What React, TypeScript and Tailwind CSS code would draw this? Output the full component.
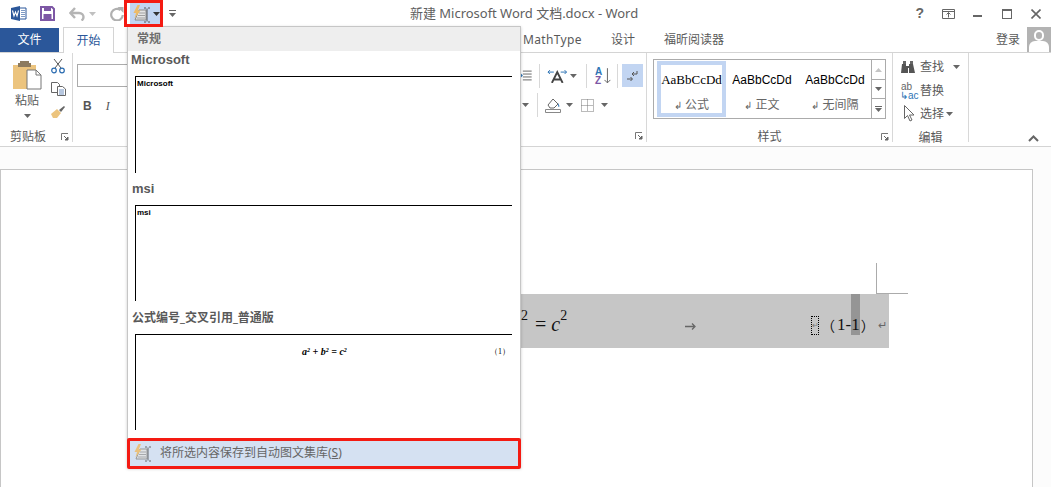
import React from "react";

const Caret = ({ c = "#666", className = "" }: { c?: string; className?: string }) => (
  <svg width="7" height="4" viewBox="0 0 7 4" className={className}><path d="M0 0h7L3.500 4z" fill={c} /></svg>
);

const AutoText = ({ faded = false }: { faded?: boolean }) => (
  <svg width="18" height="18" viewBox="0 0 18 18" opacity={faded ? 0.85 : 1}>
    <path d="M2 15 6 5h7v10z" fill="#e4e4e4" stroke="#8a8a8a" />
    <path d="M6 8h6M5 10.500h7M4 13h8" stroke="#a0a0a0" />
    <path d="M4.500 0 .5 8h2.500L1.500 13.500 7.500 5.500H4.800L7 0z" fill="#eebc68" />
    <path d="M11 3h2M15 3h2M11 17h2M15 17h2M14 3.500v13" stroke="#555" fill="none" />
  </svg>
);

const Launcher = () => (
  <svg width="8" height="8" viewBox="0 0 8 8"><path d="M.5 7V.5H7" fill="none" stroke="#777" /><path d="M3 3l4 4M7 4v3H4z" stroke="#666" fill="#666" /></svg>
);

const Sep = ({ h = "h-[24px]" }: { h?: string }) => <div className={`w-px bg-[#d8d8d8] ${h}`} />;

const Preview = ({ children, h }: { children: React.ReactNode; h: string }) => (
  <div className={`ml-[7px] w-[377px] ${h} border-t border-l border-black pl-[1px] pt-[2px] font-['Liberation_Sans',sans-serif] text-[8px] leading-[9px] font-bold text-black`}>
    {children}
  </div>
);

function TitleBar() {
  return (
    <div className="relative flex h-[27px] items-center">
      <svg width="17" height="17" viewBox="0 0 17 17" className="ml-[10px]">
        <path d="M1 3 10 1v15l-9-2z" fill="#2b579a" />
        <path d="M10 3h6v11h-6" fill="#fff" stroke="#2b579a" />
        <path d="M11 5.500h4M11 7.500h4M11 9.500h4M11 11.500h4" stroke="#7f9ac4" />
        <path d="M2.500 5.500 4 11l1.500-4L7 11l1.500-5.500" fill="none" stroke="#fff" strokeWidth="1.100" />
      </svg>
      <svg width="15" height="15" viewBox="0 0 15 15" className="ml-[13px]">
        <path d="M1 1h11l2 2v11H1z" fill="#fff" stroke="#7d57a5" strokeWidth="2" />
        <path d="M4 1h7v4H4z" fill="#7d57a5" />
        <path d="M3.500 8h8v6h-8z" fill="#7d57a5" />
      </svg>
      <svg width="16" height="14" viewBox="0 0 16 14" className="ml-[14px]">
        <path d="M2 6h8c3 0 4.500 2 4.500 4s-1 3-2 3.500" fill="none" stroke="#b5b5b5" strokeWidth="2.400" />
        <path d="M6 1 1.500 6 6 11" fill="none" stroke="#b5b5b5" strokeWidth="2.400" />
      </svg>
      <Caret c="#c0c0c0" className="ml-[4px]" />
      <svg width="14" height="14" viewBox="0 0 14 14" className="ml-[14px]">
        <path d="M10.500 3A5.800 5.800 0 1 0 12.800 8" fill="none" stroke="#b0b0b0" strokeWidth="2.200" />
        <path d="M7.500 0h6v6z" fill="#b0b0b0" />
      </svg>
      <div className="ml-[6px] flex h-[24px] w-[32px] items-center justify-center gap-[2px] bg-[#c2d5f2]">
        <AutoText />
        <Caret c="#333" />
      </div>
      <svg width="7" height="8" viewBox="0 0 7 8" className="ml-[7px]"><path d="M0 .5h7" stroke="#666" /><path d="M0 3h7L3.500 7z" fill="#666" /></svg>
      <div className="ml-[234px] text-[13px] tracking-[-0.02px] text-[#606060]">新建 Microsoft Word 文档.docx - Word</div>
      <div className="ml-auto flex items-center">
        <span className="mr-[18px] font-['Liberation_Sans',sans-serif] text-[14px] font-bold text-[#666]">?</span>
        <svg width="13" height="10" viewBox="0 0 13 10" className="mr-[18px]"><path d="M.5.500h12v9H.5zM.5 2.500h12" fill="none" stroke="#666" /><path d="M6.500 3.500v5M4.500 5.500l2-2 2 2" fill="none" stroke="#666" /></svg>
        <div className="mr-[20px] h-[2px] w-[9px] translate-y-[2px] bg-[#666]" />
        <div className="mr-[19px] h-[10px] w-[10px] border border-t-[2px] border-[#666]" />
        <svg width="10" height="10" viewBox="0 0 10 10" className="mr-[10px]"><path d="M.5.500l9 9M9.500.500l-9 9" stroke="#666" strokeWidth="1.600" /></svg>
      </div>
    </div>
  );
}

function TabRow() {
  return (
    <div className="flex h-[26px] items-stretch border-b border-[#d4d4d4] text-[12px] text-[#595959]">
      <div className="mt-[1px] flex w-[59px] items-center justify-center bg-[#2b579a] text-white">文件</div>
      <div className="-mb-px ml-[4px] flex w-[51px] items-center justify-center border border-b-0 border-[#d4d4d4] bg-white text-[#2b579a]">开始</div>
      <div className="ml-[409px] flex items-center tracking-[0.35px]">MathType</div>
      <div className="ml-[29px] flex items-center">设计</div>
      <div className="ml-[29px] flex items-center">福昕阅读器</div>
      <div className="ml-auto flex items-center">登录</div>
      <div className="relative ml-[7px] h-[25px] w-[24px] overflow-hidden bg-[#b3b3b3]">
        <div className="mx-auto mt-[3px] h-[11px] w-[10px] rounded-full border-2 border-white" />
        <div className="mx-auto h-[11px] w-[20px] rounded-t-[6px] bg-white" />
      </div>
    </div>
  );
}

function Clipboard() {
  return (
    <div className="flex w-[73px] flex-col border-r border-[#d8d8d8] text-[12px] text-[#5a5a5a]">
      <div className="flex h-[76px] shrink-0">
        <div className="ml-[12px] flex w-[30px] flex-col items-center">
          <svg width="29" height="30" viewBox="0 0 29 30" className="mt-[7px]">
            <path d="M0 5h23v24H0z" fill="#ecc47e" />
            <path d="M7 3h9V1H7zM5 3h13v4H5z" fill="#8d7b5f" />
            <path d="M14 10h9l5 5v14H14z" fill="#fff" stroke="#777" />
            <path d="M23 10v5h5" fill="none" stroke="#777" />
          </svg>
          <div className="mt-[2px] leading-[17px]">粘贴</div>
          <Caret className="mt-[5px]" />
        </div>
        <div className="ml-[8px] flex flex-col items-center">
          <svg width="14" height="16" viewBox="0 0 14 16" className="mt-[5px]">
            <path d="M3 1l7 9M11 1 4 10" stroke="#555" fill="none" />
            <circle cx="3" cy="12.500" r="2.300" fill="none" stroke="#2b6cb0" strokeWidth="1.200" />
            <circle cx="11" cy="12.500" r="2.300" fill="none" stroke="#2b6cb0" strokeWidth="1.200" />
          </svg>
          <svg width="15" height="14" viewBox="0 0 15 14" className="mt-[8px]">
            <path d="M.5.500h6l2 2v8h-8z" fill="#fff" stroke="#666" />
            <path d="M6.500 4.500h5l3 2.500v6.500h-8z" fill="#fff" stroke="#666" />
            <path d="M8 8h5M8 10h5M8 12h5" stroke="#6f8fbf" />
          </svg>
          <svg width="16" height="14" viewBox="0 0 16 14" className="mt-[9px]">
            <path d="M1 9 7 4l4 4-4 5H3z" fill="#ecc47e" />
            <path d="M9 5l5-4 1 1-4 5z" fill="#666" />
          </svg>
        </div>
      </div>
      <div className="mt-[2px] flex items-center pl-[10px] leading-[12px]">
        <span>剪贴板</span>
        <span className="ml-[15px] flex"><Launcher /></span>
      </div>
    </div>
  );
}

function FontPara() {
  return (
    <div className="flex w-[574px] flex-col border-r border-[#d8d8d8]">
      <div className="flex h-[76px] shrink-0 justify-between">
        <div className="ml-[4px] mt-[11px]">
          <div className="h-[23px] w-[53px] border border-[#ababab] bg-white" />
          <div className="mt-[10px] flex items-center font-['Liberation_Serif',serif] text-[12px] text-[#555]">
            <span className="ml-[6px] font-['Liberation_Sans',sans-serif] font-bold">B</span>
            <span className="ml-[14px] italic">I</span>
          </div>
        </div>
        <div className="mr-[3px] mt-[11px] flex w-[126px] flex-col">
          <div className="flex h-[23px] items-center">
            <svg width="15" height="11" viewBox="0 0 15 11"><path d="M6 1h9M6 4h9M6 7h9M6 10h9" stroke="#666" /><path d="M0 5.500h4M2.500 3l2.500 2.500L2.500 8" fill="none" stroke="#2f75b5" strokeWidth="1.500" /></svg>
            <div className="ml-[7px]"><Sep /></div>
            <svg width="21" height="14" viewBox="0 0 21 14" className="ml-[7px]"><path d="M5 14 10.500 3 16 14M7 10.500h7" fill="none" stroke="#444" strokeWidth="2" /><path d="M1 3h6M14 3h6M3 1 1 3l2 2M18 1l2 2-2 2" fill="none" stroke="#2f75b5" /></svg>
            <Caret className="ml-[3px]" />
            <div className="ml-[9px]"><Sep /></div>
            <div className="ml-[8px] flex h-[18px] w-[16px] flex-col font-['Liberation_Sans',sans-serif] text-[10px] leading-[9px] font-bold">
              <span className="text-[#2f75b5]">A</span>
              <span className="text-[#7d57a5]">Z</span>
            </div>
            <svg width="7" height="16" viewBox="0 0 7 16" className="-ml-[7px]"><path d="M3.500 0v15M.5 12l3 3 3-3" fill="none" stroke="#666" /></svg>
            <div className="ml-[6px]"><Sep /></div>
            <div className="ml-[4px] flex h-[23px] w-[22px] items-center justify-center bg-[#c2d5f2]">
              <svg width="11" height="12" viewBox="0 0 11 12"><path d="M10 1v3H5M7 2 5 4l2 2" fill="none" stroke="#555" /><path d="M0 9h5M3.500 7 5.500 9l-2 2" fill="none" stroke="#555" /></svg>
            </div>
          </div>
          <div className="mt-[6px] flex h-[24px] items-center">
            <Caret className="ml-[5px]" />
            <div className="ml-[8px]"><Sep /></div>
            <svg width="16" height="15" viewBox="0 0 16 15" className="ml-[7px]"><path d="M3 7 8 1l5 5-4 4H5z" fill="#fff" stroke="#666" /><path d="M13 5c1 2 2 3 1 4-1 0-1-2-1-4z" fill="#2f75b5" /><path d="M.5 11.500h15v3H.5z" fill="#fff" stroke="#888" /></svg>
            <Caret className="ml-[5px]" />
            <svg width="13" height="13" viewBox="0 0 13 13" className="ml-[8px]"><path d="M.5.500h12v12H.5zM6.500.500v12M.5 6.500h12" fill="none" stroke="#777" strokeDasharray="1 1" /></svg>
            <Caret className="ml-[7px]" />
          </div>
        </div>
      </div>
      <div className="mt-[3px] flex justify-end pr-[3px]"><Launcher /></div>
    </div>
  );
}

function Styles() {
  const cell = "flex h-[56px] flex-col items-center overflow-hidden pt-[11px]";
  return (
    <div className="flex w-[246px] flex-col border-r border-[#d8d8d8]">
      <div className="ml-[6px] mt-[6px] flex h-[60px] w-[233px] shrink-0 border border-[#ababab] bg-white">
        <div className="ml-[3px] mt-[1px] flex h-[56px] w-[69px] flex-col items-center overflow-hidden border-[4px] border-[#c2d5f2] pt-[7px]">
          <span className="font-['Liberation_Serif',serif] text-[13px] leading-[16px] whitespace-nowrap text-black">AaBbCcDd</span>
          <span className="mt-[9px] text-[12px] leading-[16px] text-[#666]"><span className="text-[10px]">↲</span> 公式</span>
        </div>
        <div className={`${cell} ml-[6px] mt-[1px] w-[60px]`}>
          <span className="font-['Liberation_Sans',sans-serif] text-[12px] leading-[16px] whitespace-nowrap text-black">AaBbCcDd</span>
          <span className="mt-[9px] text-[12px] leading-[16px] text-[#666]"><span className="text-[10px]">↲</span> 正文</span>
        </div>
        <div className={`${cell} ml-[13px] mt-[1px] w-[60px]`}>
          <span className="font-['Liberation_Sans',sans-serif] text-[12px] leading-[16px] whitespace-nowrap text-black">AaBbCcDd</span>
          <span className="mt-[9px] text-[12px] leading-[16px] whitespace-nowrap text-[#666]"><span className="text-[10px]">↲</span> 无间隔</span>
        </div>
        <div className="ml-auto flex w-[14px] flex-col border-l border-[#ababab]">
          <div className="flex h-[20px] items-center justify-center border-b border-[#ababab]"><svg width="7" height="4" viewBox="0 0 7 4"><path d="M0 4h7L3.500 0z" fill="#c4c4c4" /></svg></div>
          <div className="flex h-[19px] items-center justify-center border-b border-[#ababab]"><Caret /></div>
          <div className="flex flex-1 flex-col items-center justify-center gap-[1px]"><div className="h-px w-[7px] bg-[#666]" /><Caret /></div>
        </div>
      </div>
      <div className="relative mt-[12px] text-center text-[12px] leading-[12px] text-[#5a5a5a]">
        样式
        <span className="absolute top-[2px] right-[3px] flex"><Launcher /></span>
      </div>
    </div>
  );
}

function Editing() {
  return (
    <div className="flex w-[76px] flex-col border-r border-[#d8d8d8] text-[12px] text-[#5a5a5a]">
      <div className="mt-[2px] flex h-[74px] shrink-0 flex-col pl-[7px]">
        <div className="flex h-[24px] items-center">
          <svg width="16" height="13" viewBox="0 0 16 13"><path d="M2 3h4v2h3V3h4l2 9h-6V7H8v5H1z" fill="#555" /><path d="M3 0h3v3H3zM10 0h3v3h-3z" fill="#666" /></svg>
          <span className="ml-[4px]">查找</span>
          <Caret className="ml-[9px]" />
        </div>
        <div className="flex h-[23px] items-center">
          <div className="flex w-[16px] flex-col font-['Liberation_Sans',sans-serif] text-[10px] leading-[9px]">
            <span className="pl-[1px] text-[#666]">ab</span>
            <span className="whitespace-nowrap text-[#2f75b5]">↳ac</span>
          </div>
          <span className="ml-[4px]">替换</span>
        </div>
        <div className="flex h-[23px] items-center">
          <svg width="16" height="17" viewBox="0 0 16 17"><path d="M4.500 .5v13l3-3 2.500 5.500 2-1-2.500-5h4.500z" fill="#fff" stroke="#666" /></svg>
          <span className="ml-[4px]">选择</span>
          <Caret className="ml-[2px]" />
        </div>
      </div>
      <div className="mt-[3px] text-center leading-[12px]">编辑</div>
    </div>
  );
}

function Menu() {
  const head = "text-[13px] font-bold leading-[18px] text-[#595959] font-['Liberation_Sans',sans-serif]";
  return (
    <div className="absolute top-[26px] left-[127px] flex h-[442px] w-[394px] flex-col border border-[#c6c6c6] bg-white shadow-[0_1px_3px_rgba(0,0,0,0.2)]">
      <div className="flex h-[24px] shrink-0 items-center bg-[#eeeeee] pl-[9px] text-[12px] font-bold text-[#6e6e6e]">常规</div>
      <div className={`pl-[3px] ${head}`}>Microsoft</div>
      <div className="mt-[7px]"><Preview h="h-[97px]">Microsoft</Preview></div>
      <div className={`mt-[7px] pl-[4px] ${head}`}>msi</div>
      <div className="mt-[7px]"><Preview h="h-[96px]">msi</Preview></div>
      <div className="mt-[8px] pl-[4px] text-[12px] leading-[18px] font-bold text-[#595959]">公式编号_交叉引用_普通版</div>
      <div className="mt-[7px]">
        <Preview h="h-[96px]">
          <div className="relative mt-[10px] h-[10px] font-['Liberation_Serif',serif] text-[10px]">
            <span className="absolute left-[165px] italic whitespace-nowrap">a<sup className="text-[6px]">2</sup> + b<sup className="text-[6px]">2</sup> = c<sup className="text-[6px]">2</sup></span>
            <span className="absolute left-[353px] text-[8px] font-normal whitespace-nowrap text-black">（1）</span>
          </div>
        </Preview>
      </div>
      <div className="mt-[10px] flex h-[26px] shrink-0 items-center bg-[#d5e1f2] pl-[6px] text-[12px] text-[#666]">
        <AutoText faded />
        <span className="ml-[8px]">将所选内容保存到自动图文集库(<span className="underline">S</span>)</span>
      </div>
    </div>
  );
}

export default function App() {
  return (
    <div className="relative flex h-[487px] w-[1051px] flex-col overflow-hidden bg-[#fcfcfc] font-['Noto_Sans','Noto_Sans_CJK_SC',sans-serif]">
      <div className="bg-white">
        <TitleBar />
        <TabRow />
        <div className="relative flex h-[94px] border-b border-[#d4d4d4] pb-[4px]">
          <Clipboard />
          <FontPara />
          <Styles />
          <Editing />
          <svg width="11" height="7" viewBox="0 0 11 7" className="absolute top-[82px] right-[12px]"><path d="M1 6l4.500-4.500L10 6" fill="none" stroke="#666" strokeWidth="2" /></svg>
        </div>
      </div>
      <div className="mt-[22px] flex h-[330px] w-[1033px] shrink-0 flex-col items-end border border-[#c6c6c6] bg-white pt-[93px]">
        <div className="mr-[124px] h-[31px] w-[32px] border-b border-l border-[#ababab]" />
        <div className="mr-[143px] flex h-[54px] w-[744px] items-center bg-[#c6c6c6] text-[#111]">
          <div className="ml-[376px] flex w-[164px] translate-y-[3px] items-center font-['Liberation_Serif',serif] text-[20px] leading-[20px]">
            <span className="-translate-y-[8px] text-[14px] leading-[14px]">2</span>
            <span className="ml-[7px]">=</span>
            <span className="ml-[5px] italic">c</span>
            <span className="-translate-y-[8px] text-[14px] leading-[14px]">2</span>
          </div>
          <svg width="11" height="7" viewBox="0 0 11 7" className="translate-y-[5px]"><path d="M0 3.500h9M7 .5l3 3-3 3" fill="none" stroke="#666" strokeWidth="1.300" /></svg>
          <div className="ml-[115px] flex h-[19px] w-[8px] translate-y-[4px] items-center justify-center border border-dotted border-black text-[8px] text-[#777]">↵</div>
          <div className="relative ml-[2px] flex h-[54px] w-[68px] items-center font-['Liberation_Serif',serif] text-[17px]">
            <div className="absolute top-0 left-[30px] h-[41px] w-[9px] bg-[#959595]" />
            <span className="relative flex translate-y-[4px] items-center whitespace-nowrap">
              <span className="w-[14px] font-['Noto_Sans_CJK_SC',serif] text-[14px] leading-[14px]">（</span>
              <span className="ml-[2px]">1-1</span>
              <span className="ml-[1px] w-[14px] font-['Noto_Sans_CJK_SC',serif] text-[14px] leading-[14px]">）</span>
            </span>
            <span className="ml-[3px] translate-y-[4px] text-[11px] text-[#666]">↵</span>
          </div>
        </div>
      </div>
      <Menu />
      <div className="absolute top-0 left-[124px] h-[27px] w-[39px] border-[3px] border-[#f41a12]" />
      <div className="absolute top-[438px] left-[127px] h-[31px] w-[394px] rounded-[2px] border-[3px] border-[#f41a12]" />
    </div>
  );
}
